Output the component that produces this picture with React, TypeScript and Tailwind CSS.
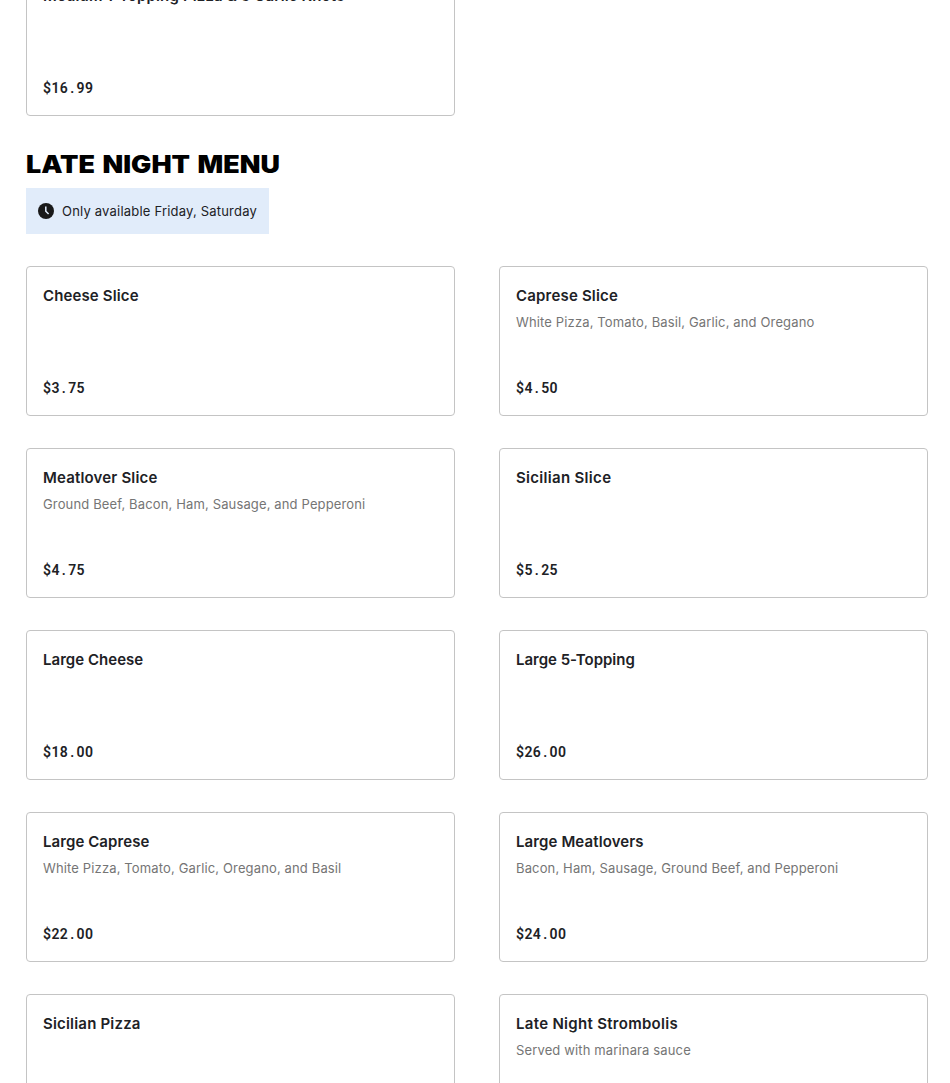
type Item = { name: string; price?: string; desc?: string; tracking: string };

const special: Item = {
  name: "Medium 1-Topping Pizza & 5 Garlic Knots",
  price: "16.99",
  tracking: "tracking-[0.14px]",
};

const items: Item[] = [
  { name: "Cheese Slice", price: "3.75", tracking: "tracking-[0.13px]" },
  { name: "Caprese Slice", price: "4.50", desc: "White Pizza, Tomato, Basil, Garlic, and Oregano", tracking: "tracking-[0.19px]" },
  { name: "Meatlover Slice", price: "4.75", desc: "Ground Beef, Bacon, Ham, Sausage, and Pepperoni", tracking: "tracking-[0.17px]" },
  { name: "Sicilian Slice", price: "5.25", tracking: "tracking-[0.31px]" },
  { name: "Large Cheese", price: "18.00", tracking: "tracking-[0.03px]" },
  { name: "Large 5-Topping", price: "26.00", tracking: "tracking-[-0.02px]" },
  { name: "Large Caprese", price: "22.00", desc: "White Pizza, Tomato, Garlic, Oregano, and Basil", tracking: "tracking-[0.08px]" },
  { name: "Large Meatlovers", price: "24.00", desc: "Bacon, Ham, Sausage, Ground Beef, and Pepperoni", tracking: "tracking-[0.11px]" },
  { name: "Sicilian Pizza", tracking: "tracking-[0.19px]" },
  { name: "Late Night Strombolis", desc: "Served with marinara sauce", tracking: "tracking-[0.3px]" },
];

function Price({ value }: { value: string }) {
  const [dollars, cents] = value.split(".");
  return (
    <p className="mt-auto font-['Roboto',sans-serif] text-sm leading-[22px] font-semibold tracking-[0.4px]">
      ${dollars}
      <span className="px-[2px]">.</span>
      {cents}
    </p>
  );
}

function MenuCard({ item }: { item: Item }) {
  return (
    <article className="flex h-[150px] flex-col rounded border border-[#c4c4c4] px-4 py-4">
      <h3 className={`text-[15px] leading-[26px] font-semibold ${item.tracking}`}>{item.name}</h3>
      {item.desc && (
        <p className="mt-[3px] text-[13px] leading-5 tracking-[0.14px] text-[#757575]">{item.desc}</p>
      )}
      {item.price && <Price value={item.price} />}
    </article>
  );
}

export default function App() {
  return (
    <div className="h-[1083px] overflow-hidden bg-white font-['Inter',sans-serif] text-[#202125]">
      <main className="flex flex-col pr-[22px] pl-[26px]">
        <section className="-mt-[34px] grid grid-cols-2 gap-x-11">
          <MenuCard item={special} />
        </section>
        <section className="mt-[33px] flex flex-col">
          <h2 className="origin-left scale-x-[1.12] self-start text-2xl leading-8 font-black text-black [word-spacing:2px]">
            LATE NIGHT MENU
          </h2>
          <div className="mt-[7px] flex h-[46px] w-[243px] items-center bg-[#e1ecfa] pl-3">
            <svg className="size-4 shrink-0" viewBox="0 0 16 16" fill="none">
              <circle cx="8" cy="8" r="8" fill="#191919" />
              <path d="M7.8 3.5v4.7l2.8 2.8" stroke="#e1ecfa" strokeWidth="1.5" />
            </svg>
            <span className="ml-2 text-[13px] leading-5 tracking-[0.2px] whitespace-nowrap">
              Only available Friday, Saturday
            </span>
          </div>
          <div className="mt-8 grid grid-cols-2 gap-x-11 gap-y-8">
            {items.map((item) => (
              <MenuCard key={item.name} item={item} />
            ))}
          </div>
        </section>
      </main>
    </div>
  );
}
